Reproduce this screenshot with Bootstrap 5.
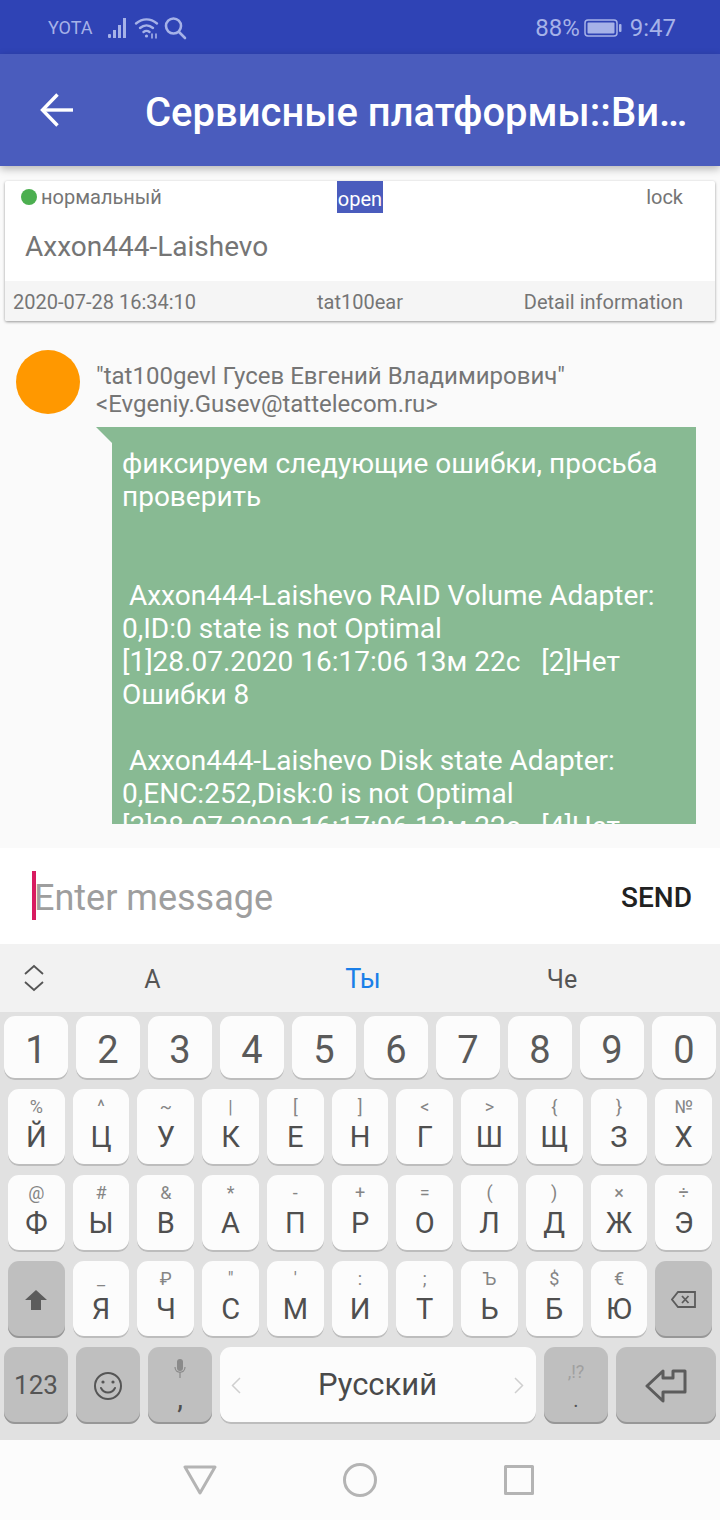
<!DOCTYPE html>
<html lang="ru">
<head>
    <meta charset="UTF-8">
    <meta name="viewport" content="width=device-width, initial-scale=1.0">
    <title>Сервисные платформы</title>
    <link href="https://cdn.jsdelivr.net/npm/bootstrap@5.3.0/dist/css/bootstrap.min.css" rel="stylesheet">
    <style>
        html, body { margin: 0; height: 1520px; overflow: hidden; }
        body { font-family: Roboto, "Noto Sans", sans-serif; background: #fafafa; }
        .screen { width: 720px; height: 1520px; overflow: hidden; }

        /* status bar */
        .status-bar { height: 54px; background: #2f43b5; color: #a6b2e8; font-size: 24px; flex: none; padding-top: 1px; }
        .status-left { padding-left: 48px; }
        .status-left .carrier { font-size: 18px; width: 60px; }
        .status-right { padding-right: 44px; }
        .battery { margin-left: 4px; margin-right: 8px; }

        /* app bar */
        .app-bar { height: 112px; background: #4a5cbd; flex: none; box-shadow: 0 3px 8px rgba(0,0,0,.28); position: relative; z-index: 2; }
        .back-btn { width: 145px; padding-left: 40px; }
        .app-title { color: #fff; font-size: 40px; font-weight: 500; width: 550px; padding-top: 5px; white-space: nowrap; overflow: hidden; text-overflow: ellipsis; }

        /* content */
        .content { height: 682px; flex: none; overflow: hidden; }
        .ticket { margin: 15px 5px 0; height: 140px; border: 0; border-radius: 2px; box-shadow: 0 1px 3px rgba(0,0,0,.4); color: #757575; font-size: 20px; overflow: hidden; }
        .ticket-top, .ticket-foot { grid-template-columns: 1fr 1fr 1fr; }
        .ticket-top { height: 32px; line-height: 32px; }
        .ticket-top > :first-child { padding-left: 16px; }
        .ticket-foot > :first-child { padding-left: 8px; }
        .ticket-top > :last-child, .ticket-foot > :last-child { padding-right: 32px; }
        .state-dot { display: inline-block; width: 16px; height: 16px; border-radius: 50%; background: #4caf50; margin-right: 4px; vertical-align: -1px; }
        .open-tag { display: inline-block; background: #4a5cbd; color: #fff; padding: 0 1px; height: 32px; line-height: 37px; }
        .ticket-name { height: 68px; line-height: 68px; padding-left: 20px; font-size: 28px; }
        .ticket-foot { height: 40px; line-height: 42px; background: #f5f5f5; }

        .msg-head { padding: 29px 0 0 16px; }
        .avatar { width: 64px; height: 64px; border-radius: 50%; background: #ff9800; flex: none; }
        .sender { margin-left: 16px; margin-top: 12px; font-size: 24px; line-height: 28px; color: #757575; }
        .bubble { position: relative; margin: 9px 24px 0 112px; height: 397px; background: #88ba93; }
        .bubble::before { content: ""; position: absolute; left: -16px; top: 0; border-top: 16px solid #88ba93; border-left: 16px solid transparent; }
        .bubble-text { height: 397px; overflow: hidden; padding: 20px 10px 0; color: #fff; font-size: 28px; line-height: 33px; white-space: pre-wrap; }

        /* message input */
        .input-bar { height: 96px; background: #fff; flex: none; padding-left: 32px; padding-right: 28px; }
        .caret-line { width: 4px; height: 49px; background: #d81b60; flex: none; margin-top: -1px; }
        .placeholder-text { font-size: 36px; color: #9e9e9e; flex: 1; margin-left: -2px; padding-top: 4px; }
        .send-text { font-size: 28px; font-weight: 500; color: #212121; padding-top: 4px; }

        /* keyboard */
        .suggest { height: 68px; background: #f2f2f2; flex: none; color: #555; font-size: 25px; }
        .suggest .chev { width: 50px; padding-left: 24px; }
        .suggest .cell-a, .suggest .cell-b, .suggest .cell-c { padding-top: 3px; }
        .suggest .cell-a { width: 205px; }
        .suggest .cell-b { width: 216px; color: #1a7fe8; font-size: 27px; }
        .suggest .cell-c { width: 182px; }
        .keyboard { height: 428px; background: #e1e1e1; flex: none; padding-top: 4px; }
        .kb-row { display: flex; gap: 8px; margin-bottom: 9px; height: 77px; padding: 0 8px; }
        .kb-row.digits { height: 64px; padding: 0 4px; }
        .kb-row.bottom { padding: 0 4px; }
        .kkey { flex: 1 1 0; min-width: 0; background: #fcfcfc; border-radius: 11px; box-shadow: inset 0 -2px 0 #bdbdbd; color: #4f4f4f; font-size: 29px; display: flex; flex-direction: column; align-items: center; }
        .kkey.dark { background: #bfbfbf; box-shadow: inset 0 -2px 0 #979797; justify-content: center; }
        .kkey .hint { font-size: 18px; line-height: 20px; color: #858585; margin-top: 8px; height: 20px; }
        .kkey .letter { line-height: 36px; margin-top: 2px; }
        .digits .kkey { font-size: 38px; line-height: 68px; color: #5a5a5a; }
        .bottom .w64 { flex: 0 0 64px; }
        .bottom .space { flex: 0 0 316px; flex-direction: row; justify-content: space-between; padding: 0 12px 0 11px; font-size: 31px; color: #4a4a4a; }
        .bottom .enter { flex: 0 0 100px; }
        .num-key { font-size: 26px; color: #555; }
        .dot-hint { font-size: 18px; color: #a0a0a0; line-height: 20px; }
        .mic-comma { line-height: 1; margin-top: 6px; }
        .dot-mark { font-size: 20px; line-height: 1; margin-top: 8px; color: #555; }

        /* nav bar */
        .nav-keys { height: 80px; background: #fcfcfc; flex: none; }
        .nav-keys svg { display: block; }
        .nav-back { margin-left: 183px; }
        .nav-home { margin-left: 126px; }
        .nav-recent { margin-left: 127px; }
    </style>
</head>
<body>
<div class="screen d-flex flex-column">

    <div class="status-bar d-flex justify-content-between align-items-center">
        <div class="status-left d-flex align-items-center">
            <span class="carrier">YOTA</span>
            <svg width="22" height="22" viewBox="0 0 22 22" fill="#a6b2e8"><rect x="0" y="17" width="3" height="4" rx="1"/><rect x="5" y="13" width="3" height="8"/><rect x="10" y="8" width="3" height="13"/><rect x="15" y="1" width="3" height="20"/></svg>
            <svg class="ms-1" width="26" height="24" viewBox="0 0 26 24" fill="none" stroke="#a6b2e8" stroke-width="2.4" stroke-linecap="round"><path d="M2 7.500C8.500 2 16.500 2 23 7.500"/><path d="M6 12C10 8.500 15 8.500 19 12"/><path d="M9.500 16C11.500 14.500 13.500 14.500 15.500 16"/><circle cx="12.500" cy="20" r="1.600" fill="#a6b2e8" stroke="none"/><path d="M18 18v4M22 18v4" stroke-width="1.600"/></svg>
            <svg class="ms-1" width="23" height="24" viewBox="0 0 23 24" fill="none" stroke="#a6b2e8" stroke-width="2.600" stroke-linecap="round"><circle cx="9.500" cy="10" r="7.500"/><path d="M15 16l6 6"/></svg>
        </div>
        <div class="status-right d-flex align-items-center">
            <span>88%</span>
            <svg class="battery" width="38" height="18" viewBox="0 0 38 18"><rect x="1" y="1" width="32" height="16" rx="3" fill="none" stroke="#a6b2e8" stroke-width="1.500"/><rect x="3.500" y="3.500" width="27" height="11" rx="1" fill="#a6b2e8"/><rect x="35" y="5" width="2.500" height="8" rx="1" fill="#a6b2e8"/></svg>
            <span>9:47</span>
        </div>
    </div>

    <div class="app-bar d-flex align-items-center">
        <div class="back-btn">
            <svg class="d-block" width="34" height="34" viewBox="0 0 34 34" fill="none" stroke="#fff" stroke-width="3.400"><path d="M33 17H3"/><path d="M17.500 1.500L2.500 17l15 15.500"/></svg>
        </div>
        <div class="app-title">Сервисные платформы::Видеонаблюдение</div>
    </div>

    <div class="content">
        <div class="card ticket">
            <div class="ticket-top d-grid">
                <div><span class="state-dot"></span>нормальный</div>
                <div class="text-center"><span class="open-tag">open</span></div>
                <div class="text-end">lock</div>
            </div>
            <div class="ticket-name">Axxon444-Laishevo</div>
            <div class="ticket-foot d-grid">
                <div>2020-07-28 16:34:10</div>
                <div class="text-center">tat100ear</div>
                <div class="text-end">Detail information</div>
            </div>
        </div>

        <div class="msg-head d-flex">
            <div class="avatar"></div>
            <div class="sender">"tat100gevl Гусев Евгений Владимирович"<br>&lt;Evgeniy.Gusev@tattelecom.ru&gt;</div>
        </div>
        <div class="bubble">
            <div class="bubble-text">фиксируем следующие ошибки, просьба проверить


 Axxon444-Laishevo RAID Volume Adapter: 0,ID:0 state is not Optimal
[1]28.07.2020 16:17:06 13м 22с   [2]Нет Ошибки 8

 Axxon444-Laishevo Disk state Adapter: 0,ENC:252,Disk:0 is not Optimal
[3]28.07.2020 16:17:06 13м 22с   [4]Нет</div>
        </div>
    </div>

    <div class="input-bar d-flex align-items-center">
        <div class="caret-line"></div>
        <div class="placeholder-text">Enter message</div>
        <div class="send-text">SEND</div>
    </div>

    <div class="suggest d-flex align-items-center">
        <div class="chev">
            <svg class="d-block" width="20" height="28" viewBox="0 0 20 28" fill="none" stroke="#555" stroke-width="1.800"><path d="M1 10l9-8 9 8"/><path d="M1 18l9 8 9-8"/></svg>
        </div>
        <div class="cell-a text-center">А</div>
        <div class="cell-b text-center">Ты</div>
        <div class="cell-c text-center">Че</div>
    </div>

    <div class="keyboard">
        <div class="kb-row digits">
            <div class="kkey">1</div><div class="kkey">2</div><div class="kkey">3</div><div class="kkey">4</div><div class="kkey">5</div><div class="kkey">6</div><div class="kkey">7</div><div class="kkey">8</div><div class="kkey">9</div><div class="kkey">0</div>
        </div>
        <div class="kb-row">
            <div class="kkey"><span class="hint">%</span><span class="letter">Й</span></div>
            <div class="kkey"><span class="hint">^</span><span class="letter">Ц</span></div>
            <div class="kkey"><span class="hint">~</span><span class="letter">У</span></div>
            <div class="kkey"><span class="hint">|</span><span class="letter">К</span></div>
            <div class="kkey"><span class="hint">[</span><span class="letter">Е</span></div>
            <div class="kkey"><span class="hint">]</span><span class="letter">Н</span></div>
            <div class="kkey"><span class="hint">&lt;</span><span class="letter">Г</span></div>
            <div class="kkey"><span class="hint">&gt;</span><span class="letter">Ш</span></div>
            <div class="kkey"><span class="hint">{</span><span class="letter">Щ</span></div>
            <div class="kkey"><span class="hint">}</span><span class="letter">З</span></div>
            <div class="kkey"><span class="hint">№</span><span class="letter">Х</span></div>
        </div>
        <div class="kb-row">
            <div class="kkey"><span class="hint">@</span><span class="letter">Ф</span></div>
            <div class="kkey"><span class="hint">#</span><span class="letter">Ы</span></div>
            <div class="kkey"><span class="hint">&amp;</span><span class="letter">В</span></div>
            <div class="kkey"><span class="hint">*</span><span class="letter">А</span></div>
            <div class="kkey"><span class="hint">-</span><span class="letter">П</span></div>
            <div class="kkey"><span class="hint">+</span><span class="letter">Р</span></div>
            <div class="kkey"><span class="hint">=</span><span class="letter">О</span></div>
            <div class="kkey"><span class="hint">(</span><span class="letter">Л</span></div>
            <div class="kkey"><span class="hint">)</span><span class="letter">Д</span></div>
            <div class="kkey"><span class="hint">×</span><span class="letter">Ж</span></div>
            <div class="kkey"><span class="hint">÷</span><span class="letter">Э</span></div>
        </div>
        <div class="kb-row">
            <div class="kkey dark">
                <svg width="22" height="20" viewBox="0 0 22 20" fill="#5c5c5c"><path d="M11 0L22 10H16V20H6V10H0Z"/></svg>
            </div>
            <div class="kkey"><span class="hint">_</span><span class="letter">Я</span></div>
            <div class="kkey"><span class="hint">₽</span><span class="letter">Ч</span></div>
            <div class="kkey"><span class="hint">"</span><span class="letter">С</span></div>
            <div class="kkey"><span class="hint">'</span><span class="letter">М</span></div>
            <div class="kkey"><span class="hint">:</span><span class="letter">И</span></div>
            <div class="kkey"><span class="hint">;</span><span class="letter">Т</span></div>
            <div class="kkey"><span class="hint">Ъ</span><span class="letter">Ь</span></div>
            <div class="kkey"><span class="hint">$</span><span class="letter">Б</span></div>
            <div class="kkey"><span class="hint">€</span><span class="letter">Ю</span></div>
            <div class="kkey dark">
                <svg width="25" height="17" viewBox="0 0 25 17" fill="none" stroke="#5c5c5c" stroke-width="1.800"><path d="M7 1H24V16H7L1 8.500Z"/><path d="M11 5l6.500 7M17.500 5L11 12"/></svg>
            </div>
        </div>
        <div class="kb-row bottom">
            <div class="kkey dark w64 num-key">123</div>
            <div class="kkey dark w64">
                <svg width="30" height="30" viewBox="0 0 30 30" fill="none" stroke="#555" stroke-width="2"><circle cx="15" cy="15" r="13"/><path d="M8 17c3 6 11 6 14 0" stroke-linecap="round"/><circle cx="10" cy="11" r="1.600" fill="#555" stroke="none"/><circle cx="20" cy="11" r="1.600" fill="#555" stroke="none"/></svg>
            </div>
            <div class="kkey dark w64">
                <svg width="12" height="19" viewBox="0 0 12 19" fill="#8a8a8a"><rect x="3" y="0" width="6" height="12" rx="3"/><path d="M1 8c0 7 10 7 10 0" fill="none" stroke="#8a8a8a" stroke-width="1.200"/><rect x="5.400" y="13" width="1.200" height="6"/></svg>
                <span class="mic-comma">,</span>
            </div>
            <div class="kkey space align-items-center">
                <svg width="10" height="17" viewBox="0 0 10 17" fill="none" stroke="#cfcfcf" stroke-width="1.500"><path d="M9 1L1.500 8.500 9 16"/></svg>
                <span>Русский</span>
                <svg width="10" height="17" viewBox="0 0 10 17" fill="none" stroke="#cfcfcf" stroke-width="1.500"><path d="M1 1l7.500 7.500L1 16"/></svg>
            </div>
            <div class="kkey dark w64">
                <span class="dot-hint">,!?</span>
                <span class="dot-mark">.</span>
            </div>
            <div class="kkey dark enter">
                <svg width="42" height="34" viewBox="0 0 42 34" fill="none" stroke="#5c5c5c" stroke-width="3" stroke-linejoin="round"><path d="M2 17L18 2V9H28V2H40V23H18V32Z"/></svg>
            </div>
        </div>
    </div>

    <div class="nav-keys d-flex align-items-center">
        <svg class="nav-back" width="34" height="30" viewBox="0 0 34 30" fill="none" stroke="#b4b4b4" stroke-width="3" stroke-linejoin="round"><path d="M2 2H32L17 28Z"/></svg>
        <svg class="nav-home" width="34" height="34" viewBox="0 0 34 34" fill="none" stroke="#b4b4b4" stroke-width="3"><circle cx="17" cy="17" r="15.500"/></svg>
        <svg class="nav-recent" width="30" height="30" viewBox="0 0 30 30" fill="none" stroke="#b4b4b4" stroke-width="3" stroke-linejoin="round"><rect x="1.500" y="1.500" width="27" height="27"/></svg>
    </div>
</div>
<script src="https://cdn.jsdelivr.net/npm/bootstrap@5.3.0/dist/js/bootstrap.bundle.min.js"></script>
</body>
</html>
